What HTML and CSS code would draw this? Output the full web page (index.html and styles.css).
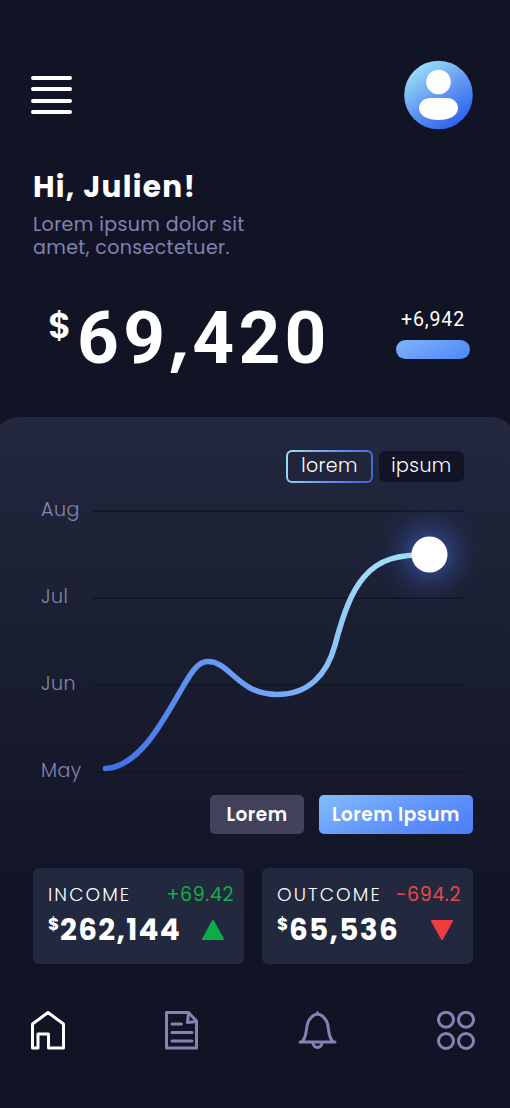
FILE: index.html
```html
<!DOCTYPE html>
<html lang="en">
<head>
<meta charset="utf-8">
<title>Balance overview</title>
<link rel="stylesheet" href="styles.css">
</head>
<body>
<main class="app">
  <header class="topbar">
    <div class="menu"><i></i><i></i><i></i><i></i></div>
    <svg class="avatar" viewBox="0 0 70 70">
      <defs><linearGradient id="av" x1=".15" y1=".08" x2=".75" y2=".95"><stop offset="0" stop-color="#9ae3fa"/><stop offset=".5" stop-color="#659bf3"/><stop offset="1" stop-color="#2e62f0"/></linearGradient></defs>
      <circle cx="34.500" cy="35" r="34.300" fill="url(#av)"/>
      <circle cx="34.500" cy="22" r="12.300" fill="#fff"/>
      <path d="M27 38H42C50 38 54 43 54 48C54 56 45 60 34.500 60S15 56 15 48C15 43 19 38 27 38Z" fill="#fff"/>
    </svg>
  </header>

  <section class="greeting">
    <h1>Hi, Julien!</h1>
    <p>Lorem ipsum dolor sit<br>amet, consectetuer.</p>
  </section>

  <section class="balance">
    <div class="total"><span class="currency">$</span><span class="figure">69<span class="comma">,</span>420</span></div>
    <div class="change"><span>+6,942</span><div class="pill"></div></div>
  </section>

  <section class="panel">
    <div class="tabs">
      <div class="tab active"><span>lorem</span></div>
      <div class="tab"><span>ipsum</span></div>
    </div>
    <div class="chart">
      <div class="months"><span>Aug</span><span>Jul</span><span>Jun</span><span>May</span></div>
      <svg class="plot" viewBox="93 500 380 285">
        <defs>
          <linearGradient id="curve" gradientUnits="userSpaceOnUse" x1="105" y1="768" x2="370" y2="570"><stop offset="0" stop-color="#4170e8"/><stop offset=".45" stop-color="#6798f6"/><stop offset=".75" stop-color="#8bc3f8"/><stop offset="1" stop-color="#9edbf9"/></linearGradient>
          <radialGradient id="glow"><stop offset="0" stop-color="#4368d8" stop-opacity=".55"/><stop offset=".35" stop-color="#3f60c8" stop-opacity=".42"/><stop offset=".6" stop-color="#3a58b5" stop-opacity=".18"/><stop offset=".8" stop-color="#3a58b5" stop-opacity=".05"/><stop offset="1" stop-color="#3450a5" stop-opacity="0"/></radialGradient>
        </defs>
        <path d="M93 511.200H463M93 598.200H463M93 685H463M93 771.800H463" stroke="#111425" stroke-width="1.500"/>
        <circle cx="429.500" cy="554.500" r="54" fill="url(#glow)"/>
        <path d="M105.500 768.500C138 767 161 725 181 690C192 671 198 661.500 208 661.500C230 661.500 238 694.500 277 694.500C308 694.500 327 675 335 645C343 615 351 592 364 577C379 559 398 554.500 430 554.500" fill="none" stroke="url(#curve)" stroke-width="5.500" stroke-linecap="round"/>
        <circle cx="429.500" cy="554.500" r="18" fill="#fff"/>
      </svg>
    </div>
    <div class="actions">
      <div class="btn muted"><span>Lorem</span></div>
      <div class="btn primary"><span>Lorem Ipsum</span></div>
    </div>
    <div class="cards">
      <article class="card">
        <div class="row"><span class="label">INCOME</span><span class="delta up">+69.42</span></div>
        <div class="row"><div class="amount"><span class="small">$</span><span class="value">262,144</span></div>
          <svg class="arrow" viewBox="0 0 24 22"><path d="M12 2L22 20H2Z" fill="#0bae46" stroke="#0bae46" stroke-width="2" stroke-linejoin="round"/></svg></div>
      </article>
      <article class="card">
        <div class="row"><span class="label">OUTCOME</span><span class="delta down">-694.2</span></div>
        <div class="row"><div class="amount"><span class="small">$</span><span class="value">65,536</span></div>
          <svg class="arrow" viewBox="0 0 24 22"><path d="M2 2H22L12 20Z" fill="#f03c3e" stroke="#f03c3e" stroke-width="2" stroke-linejoin="round"/></svg></div>
      </article>
    </div>
  </section>

  <nav class="nav">
    <svg viewBox="0 0 40 40"><path d="M3.500 14L19 2.500L34.500 14V38H19.500V24H9V38H3.500Z"/></svg>
    <svg viewBox="0 0 40 40"><path d="M1.500 2.500H23.500L31.500 11V38H1.500ZM23.500 2.500L22.500 12.500L31.500 11.500M7 14H16.500M7 22.500H27M7 31H27"/></svg>
    <svg viewBox="0 0 40 40"><path d="M0 32H35M2 31.500C8 26 5 18 8.500 11C11 6.500 14.500 4.500 17.500 4C20.500 4.500 24 6.500 26.500 11C30 18 27 26 33 31.500M13 32.500C13 39 22 39 22 32.500M17.500 2.700V3.500"/></svg>
    <svg viewBox="0 0 40 40"><circle cx="10" cy="9.700" r="7.500"/><circle cx="30" cy="9.700" r="7.500"/><circle cx="10" cy="31" r="7.500"/><circle cx="30" cy="31" r="7.500"/></svg>
  </nav>
</main>
</body>
</html>
```
FILE: styles.css
```css
* { box-sizing: border-box; }
body { margin: 0; background: #111425; }
.app { width: 510px; height: 1108px; overflow: hidden; background: #111425; color: #fff; font-family: Poppins, Inter, "Liberation Sans", sans-serif; white-space: nowrap; display: flex; flex-direction: column; }
.app > * { flex-shrink: 0; }
.topbar { height: 170px; padding: 60px 36px 0 31px; display: flex; justify-content: space-between; align-items: flex-start; }
.menu { width: 41px; margin-top: 16px; display: grid; gap: 7.300px; }
.menu i { height: 4px; border-radius: 2px; background: #fff; }
.avatar { width: 70px; height: 70px; }
.greeting { height: 125px; padding: 0 33px; }
h1 { margin: 0; font-size: 29.500px; line-height: 34px; font-weight: 700; letter-spacing: 1.300px; }
p { margin: 10px 0 0; font-size: 19px; line-height: 22.500px; color: #8283b1; letter-spacing: .38px; }
.balance { height: 122px; padding: 0 40px 0 48px; display: flex; justify-content: space-between; }
.total { display: flex; align-items: flex-start; font-family: Roboto, sans-serif; }
.currency { font-family: Poppins, Inter, sans-serif; font-size: 36px; line-height: 61px; font-weight: 600; width: 29px; }
.figure { font-size: 73px; line-height: 86px; font-weight: 700; letter-spacing: 4.300px; }
.comma { font-family: Poppins, Inter, sans-serif; font-weight: 600; line-height: 0; }
.change { width: 74px; text-align: center; padding-top: 12px; font-family: Roboto, sans-serif; font-size: 19.500px; line-height: 26px; letter-spacing: .9px; }
.pill { height: 19px; margin-top: 7px; border-radius: 10px; background: linear-gradient(155deg, #7fb5fb, #5085f8); }
.panel { height: 547px; margin: 0 -8px; border-radius: 28px 28px 0 0; padding: 33px 45px 0 41px; background: linear-gradient(#23283f 0, #1e2338 110px, #191d30 260px, #151829 380px, #111425 500px); }
.tabs { display: flex; justify-content: flex-end; align-items: center; gap: 6px; height: 33px; padding-right: 9px; font-size: 19px; line-height: 30px; font-weight: 300; }
.tab { width: 85px; height: 31px; border-radius: 6px; background: #111425; text-align: center; letter-spacing: .4px; }
.active { width: 87px; height: 33px; line-height: 28px; border: 2px solid transparent; background: linear-gradient(#20253b, #20253b) padding-box, linear-gradient(110deg, #9ce4f4, #648ff0 55%, #3d62d2) border-box; }
.chart { display: flex; height: 285px; margin-top: 17px; }
.months { width: 60px; padding: 0 0 0 8px; color: #8586b0; font-size: 19px; line-height: 20px; font-weight: 300; display: grid; grid-auto-rows: 86.900px; letter-spacing: .5px; }
.plot { width: 380px; height: 285px; overflow: visible; flex-shrink: 0; }
.actions { display: flex; justify-content: flex-end; gap: 15px; height: 39px; margin-top: 10px; font-size: 18.500px; line-height: 39px; font-weight: 600; letter-spacing: .5px; }
.btn { border-radius: 5px; text-align: center; }
.muted { width: 94px; background: #42435b; }
.primary { width: 154px; background: linear-gradient(155deg, #82bdfc, #6094fa 55%, #4c7cf5); }
.cards { display: grid; grid-template-columns: 211px 211px; gap: 18px; margin-top: 34px; }
.card { height: 96px; border-radius: 6px; background: #22283e; padding: 12px 11px 0 15px; }
.row { display: flex; justify-content: space-between; align-items: center; height: 29px; font-size: 18.500px; }
.row + .row { margin-top: 4px; height: 34px; }
.label { font-weight: 300; letter-spacing: 2.100px; margin-top: -1px; }
.delta { font-size: 19px; letter-spacing: .6px; margin: -1px -1px 0 0; }
.up { color: #12ad4b; }
.down { margin-right: 1px; color: #e8484d; }
.amount { display: flex; align-items: flex-start; font-weight: 700; }
.small { font-size: 17px; line-height: 23px; width: 12px; }
.value { font-size: 29.500px; line-height: 34px; letter-spacing: 1.300px; }
.arrow { width: 24px; height: 22px; margin-right: 8px; }
.nav { display: flex; justify-content: space-between; margin-top: 46px; padding: 0 34px 0 29px; }
.nav svg { width: 40px; height: 40px; overflow: visible; fill: none; stroke: #8384b3; stroke-width: 3; stroke-linecap: round; stroke-linejoin: round; }
.nav svg:first-child { stroke: #fff; }
```
